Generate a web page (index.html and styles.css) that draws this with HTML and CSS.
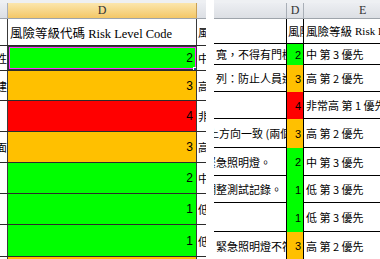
FILE: index.html
```html
<!DOCTYPE html>
<html>
<head>
<meta charset="utf-8">
<link rel="stylesheet" href="styles.css">
</head>
<body>
<div class="page">
  <div class="sheet left">
    <div class="row strip"><div class="c a"></div><div class="c d"></div><div class="c o"></div></div>
    <div class="row head"><div class="c a"></div><div class="c d hsel">D</div><div class="c o"></div></div>
    <div class="row h27"><div class="c a"></div><div class="c d label">風險等級代碼 Risk Level Code</div><div class="c o frag">風險</div></div>
    <div class="row h25"><div class="c a frag-l">性</div><div class="c d green sel">2<span class="selbox"></span><span class="handle"></span></div><div class="c o frag">中</div></div>
    <div class="row h30"><div class="c a frag-l">建</div><div class="c d orange">3</div><div class="c o frag">高</div></div>
    <div class="row h31"><div class="c a"></div><div class="c d red">4</div><div class="c o frag">非</div></div>
    <div class="row h31"><div class="c a frag-l">面</div><div class="c d orange">3</div><div class="c o frag">高</div></div>
    <div class="row h31"><div class="c a"></div><div class="c d green">2</div><div class="c o frag">中</div></div>
    <div class="row h31"><div class="c a"></div><div class="c d green">1</div><div class="c o frag">低</div></div>
    <div class="row h32"><div class="c a"></div><div class="c d green">1</div><div class="c o frag">低</div></div>
    <div class="row h31"><div class="c a"></div><div class="c d orange">3</div><div class="c o frag">高</div></div>
  </div>
  <div class="sheet right">
    <div class="row strip"><div class="c rc"></div><div class="c rd"></div><div class="c re"></div></div>
    <div class="row rhead"><div class="c rc"></div><div class="c rd">D</div><div class="c re">E</div></div>
    <div class="row r25"><div class="c rc"></div><div class="c rd rlabel">風險</div><div class="c re rlabel">風險等級 <span class="serif">Risk Level</span></div></div>
    <div class="row r21"><div class="c rc"><span class="t s2">寬，不得有門檻</span></div><div class="c rd green">2</div><div class="c re">中 第 3 優先</div></div>
    <div class="row r27"><div class="c rc"><span class="t s2">列：防止人員進</span></div><div class="c rd orange">3</div><div class="c re">高 第 2 優先</div></div>
    <div class="row r27"><div class="c rc"></div><div class="c rd red">4</div><div class="c re">非常高 第 1 優先</div></div>
    <div class="row r29"><div class="c rc"><span class="t s3">上方向一致 (兩個</span></div><div class="c rd orange">3</div><div class="c re">高 第 2 優先</div></div>
    <div class="row r28"><div class="c rc"><span class="t s4">緊急照明燈。</span></div><div class="c rd green">2</div><div class="c re">中 第 3 優先</div></div>
    <div class="row r27"><div class="c rc"><span class="t s4">調整測試記錄。</span></div><div class="c rd green">1</div><div class="c re">低 第 3 優先</div></div>
    <div class="row r29"><div class="c rc"></div><div class="c rd green">1</div><div class="c re">低 第 3 優先</div></div>
    <div class="row r28"><div class="c rc"><span class="t s5">，緊急照明燈不符</span></div><div class="c rd orange">3</div><div class="c re">高 第 2 優先</div></div>
  </div>
</div>
</body>
</html>
```
FILE: styles.css
```css
html, body { margin: 0; padding: 0; background: #fff; }
body { width: 380px; height: 259px; overflow: hidden; }
.page { display: flex; gap: 8px; }
.sheet { display: flex; flex-direction: column; flex: none; overflow: hidden; height: 259px; }
.left { width: 206px; }
.right { width: 166px; }
.row { display: flex; flex: none; box-sizing: border-box; }
.c { box-sizing: border-box; flex: none; overflow: hidden; white-space: nowrap; height: 100%;
  font-family: "Noto Sans CJK TC", sans-serif; font-size: 12px; color: #000; }
.left .row { border-bottom: 1px solid #2b2b2b; }
.left .c.a { width: 8px; border-right: 1px solid #3a3a3a; }
.left .c.d { width: 189px; border-right: 1px solid #3a3a3a; display: flex; align-items: center; justify-content: flex-end; padding-right: 3px;
  font-family: "Liberation Sans", Arial, sans-serif; font-size: 12px; position: relative; }
.left .c.o { width: 9px; }
.strip { height: 3px; background: #eef0f3; border-bottom: none !important; }
.strip .c { border-right: none !important; border-bottom: none !important; }
.head { height: 16px; border-bottom: 1px solid #9ea4ab !important; }
.head .c { background: linear-gradient(#eceef2, #dcdfe4); border-right: 1px solid #a9afb7 !important; }
.head .c.o { border-right: none !important; }
.head .c.hsel { background: linear-gradient(#fbe6ae, #f4c766); border-right: 1px solid #c9a055 !important;
  justify-content: center !important; padding-right: 0 !important; font-family: "Liberation Serif", serif !important; font-size: 12px !important; color: #333 !important; }
.h25 { height: 25px; } .h27 { height: 27px; } .h30 { height: 30px; } .h31 { height: 31px; } .h32 { height: 32px; }
.left .c.d.label { justify-content: flex-start; padding-left: 2px; font-family: "Liberation Serif", "Noto Sans CJK TC", serif; font-size: 12.5px; }
.frag { display: flex; align-items: center; padding-left: 1px; font-size: 11px; }
.frag-l { display: flex; align-items: center; justify-content: flex-end; font-size: 11px; }
.green { background: #00ff00; }
.orange { background: #ffc000; }
.red { background: #ff0000; }
.selbox { position: absolute; left: -1px; top: -1px; right: -2px; bottom: -1px; border: 2px solid #333; box-shadow: inset 0 0 0 1px #ff33ff; }
.handle { position: absolute; right: -4px; bottom: -4px; width: 5px; height: 5px; background: #2b4f8f; border: 1px solid #fff; }
.right .c { border-bottom: 1px solid #000; }
.right .c.rc { width: 73px; border-right: 1px solid #000; display: flex; align-items: center; }
.right .c.rd { width: 17px; border-right: 1px solid #000; display: flex; align-items: center; justify-content: flex-end; padding-right: 2px;
  font-family: "Liberation Sans", Arial, sans-serif; font-size: 11px; }
.right .c.rd.green, .right .c.rd.orange, .right .c.rd.red { border-bottom: none; }
.right .c.re { width: 76px; display: flex; align-items: center; padding-left: 2px; font-size: 11px; }
.rhead { height: 16px; }
.rhead .c { background: linear-gradient(#eceef2, #dcdfe4); border-right: 1px solid #a9afb7 !important; border-bottom: 1px solid #9ea4ab !important; justify-content: center !important;
  font-family: "Liberation Serif", serif !important; font-size: 12px !important; color: #333 !important; padding: 0 !important; }
.rhead .c.re { justify-content: flex-start !important; padding-left: 55px !important; border-right: none !important; }
.r21 { height: 21px; } .r25 { height: 25px; } .r27 { height: 27px; } .r28 { height: 28px; } .r29 { height: 29px; }
.right .c.rd.rlabel { justify-content: flex-start; padding-left: 1px; padding-right: 0; font-family: "Noto Sans CJK TC", sans-serif; font-size: 11.5px; }
.right .c.re.rlabel { font-size: 11.5px; }
.serif { font-family: "Liberation Serif", serif; font-size: 11px; margin-left: 3px; }
.t { font-size: 11px; }
.s2 { margin-left: 2px; }
.s3 { margin-left: -6px; }
.s4 { margin-left: -9px; }
.s5 { margin-left: -9px; }
```
